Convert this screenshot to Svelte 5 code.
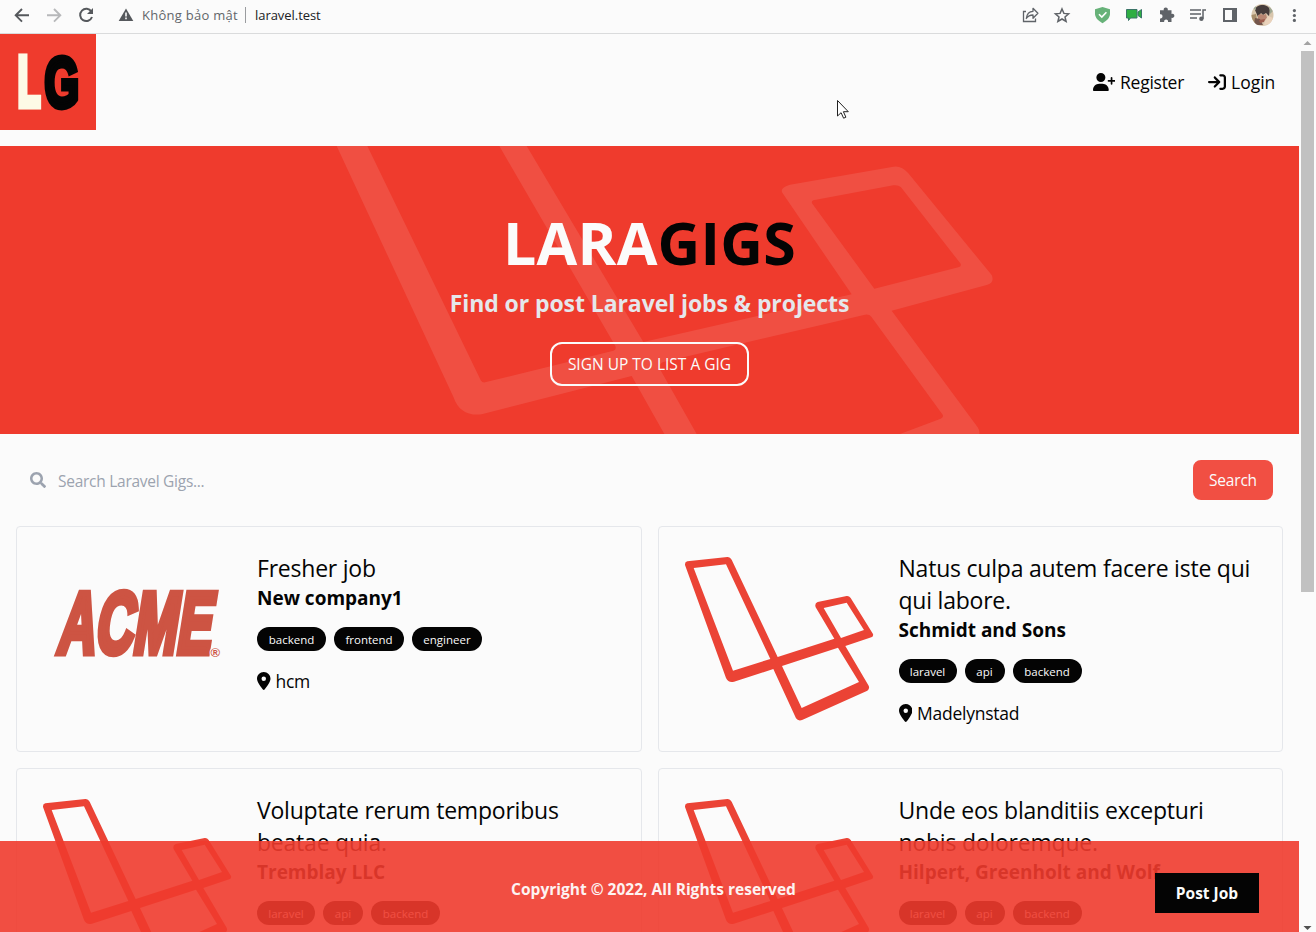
<script>
  const icons = {
    user: {
      box: '0 0 640 512', w: 22.5, h: 18,
      d: 'M96 128a128 128 0 1 1 256 0A128 128 0 1 1 96 128zM0 482.3C0 383.8 79.8 304 178.3 304h91.4C368.2 304 448 383.8 448 482.3c0 16.4-13.3 29.7-29.7 29.7H29.7C13.3 512 0 498.7 0 482.3zM504 312V248H440c-13.3 0-24-10.7-24-24s10.7-24 24-24h64V136c0-13.3 10.7-24 24-24s24 10.7 24 24v64h64c13.3 0 24 10.7 24 24s-10.7 24-24 24H552v64c0 13.3-10.7 24-24 24s-24-10.7-24-24z'
    },
    login: {
      box: '0 0 512 512', w: 18, h: 18,
      d: 'M352 96l64 0c17.7 0 32 14.3 32 32l0 256c0 17.7-14.3 32-32 32l-64 0c-17.7 0-32 14.3-32 32s14.3 32 32 32l64 0c53 0 96-43 96-96l0-256c0-53-43-96-96-96l-64 0c-17.7 0-32 14.3-32 32s14.3 32 32 32zm-9.4 182.6c12.5-12.5 12.5-32.8 0-45.3l-128-128c-12.5-12.5-32.8-12.5-45.3 0s-12.5 32.8 0 45.3L242.7 224 32 224c-17.7 0-32 14.3-32 32s14.3 32 32 32l210.7 0-73.4 73.4c-12.5 12.5-12.5 32.8 0 45.3s32.8 12.5 45.3 0l128-128z'
    },
    pin: {
      box: '0 0 384 512', w: 13.5, h: 18,
      d: 'M215.7 499.2C267 435 384 279.4 384 192C384 86 298 0 192 0S0 86 0 192c0 87.4 117 243 168.3 307.2c12.3 15.3 35.1 15.3 47.4 0zM192 128a64 64 0 1 1 0 128 64 64 0 1 1 0-128z'
    },
    search: {
      box: '0 0 512 512', w: 16, h: 16,
      d: 'M505 442.7L405.3 343c-4.5-4.5-10.6-7-17-7H372c27.6-35.3 44-79.7 44-128C416 93.1 322.9 0 208 0S0 93.1 0 208s93.1 208 208 208c48.3 0 92.7-16.4 128-44v16.3c0 6.4 2.5 12.5 7 17l99.7 99.7c9.4 9.4 24.6 9.4 33.9 0l28.3-28.3c9.4-9.4 9.4-24.6.1-34zM208 336c-70.7 0-128-57.2-128-128 0-70.7 57.2-128 128-128 70.7 0 128 57.2 128 128 0 70.7-57.2 128-128 128z'
    }
  };

  const gigs = [
    { title: ['Fresher job'], company: 'New company1', tags: ['backend', 'frontend', 'engineer'], place: 'hcm', acme: true },
    { title: ['Natus culpa autem facere iste qui', 'qui labore.'], company: 'Schmidt and Sons', tags: ['laravel', 'api', 'backend'], place: 'Madelynstad' },
    { title: ['Voluptate rerum temporibus', 'beatae quia.'], company: 'Tremblay LLC', tags: ['laravel', 'api', 'backend'], place: '' },
    { title: ['Unde eos blanditiis excepturi', 'nobis doloremque.'], company: 'Hilpert, Greenholt and Wolf', tags: ['laravel', 'api', 'backend'], place: '' }
  ];
</script>

{#snippet icon(i)}
  <svg class="icon" viewBox={i.box} width={i.w} height={i.h} fill="currentColor"><path d={i.d} /></svg>
{/snippet}

<div class="window">
  <div class="toolbar">
    <svg class="left-tools" width="140" height="32" viewBox="0 0 140 32" fill="none">
      <path d="M29 15.3H16M22 9l-6.3 6.3L22 21.6" stroke="#55585c" stroke-width="1.9" />
      <path d="M47 15.3h13M54 9l6.3 6.3L54 21.6" stroke="#b7b8ba" stroke-width="1.9" />
      <path d="M91.4 11.6A6.1 6.1 0 1 0 92 17" stroke="#55585c" stroke-width="2" />
      <path d="M93 8v6h-6z" fill="#55585c" />
      <path d="M126 8.5l7.3 12.5h-14.6z" fill="#55585c" />
      <path d="M126 12.5v4M126 17.5v1.7" stroke="#fbfbfb" stroke-width="1.6" />
    </svg>
    <span class="insecure">Không bảo mật</span>
    <span class="divider"></span>
    <span class="host">laravel.test</span>
    <svg class="right-tools" width="296" height="32" viewBox="1020 0 296 32" fill="none">
      <g stroke="#5f6368" stroke-width="1.3">
        <path d="M1026 11.500h-2.500v10h12V18.500" />
        <path d="M1026.300 18.500c.5-4.500 3-7 6.700-7.200V8.300l4.900 5-4.900 5v-3.300c-2.800 0-4.900.8-6.700 3.500z" stroke-linejoin="round" />
        <path d="M1062 9l1.900 4.400 4.700.4-3.600 3.100 1.100 4.600-4.100-2.500-4.100 2.500 1.100-4.600-3.600-3.100 4.700-.4z" stroke-width="1.500" />
      </g>
      <path d="M1102.500 7l7.500 2.300v4.500c0 4-3.500 7.300-7.500 9.400-4-2.100-7.500-5.400-7.500-9.400V9.300z" fill="#67b279" />
      <path d="M1099 14.200l2.800 2.800 4.600-4.800" stroke="#fff" stroke-width="1.600" />
      <path d="M1126.500 9.500h10.500v8.500h-6.500l-2 2.500V18h-2z" fill="#2fae43" stroke="#3b7468" />
      <path d="M1138 12l3.500-2.500v8.500l-3.500-2.500z" fill="#2fae43" stroke="#3b7468" />
      <path d="M1171 10.300h-3.300a2.100 2.100 0 1 0-3.900 0H1160v4a2.100 2.100 0 1 1 0 4.100v3.600h4.200a2 2 0 1 1 3.800 0h3.500v-4.200a2.100 2.100 0 1 0 0-3.900v-3.600z" fill="#5f6368" />
      <path d="M1190 10h11M1190 14h11M1190 18h7M1203 18.700V9.900h3" stroke="#5f6368" stroke-width="1.500" />
      <circle cx="1201.400" cy="18.700" r="2.200" fill="#5f6368" />
      <path d="M1223 8h14v14h-14zM1225 10v10h7v-10z" fill="#5f6368" fill-rule="evenodd" />
      <clipPath id="face"><circle cx="1262.500" cy="15" r="11" /></clipPath>
      <g clip-path="url(#face)">
        <path d="M1251 4h23v22h-23z" fill="#d8c6ad" />
        <path d="M1251 15l5-1 2 12h-7z" fill="#a88e6b" />
        <path d="M1255 10c1-6 13-7 15 0l-1 6-3-3-3 2-2-2-3 4z" fill="#463c3b" />
        <path d="M1258 15l3-1 2 1 3-1 1 4-4 4-5-3z" fill="#b88672" />
        <path d="M1255 18l5 1 3 6h-9z" fill="#74564c" />
        <path d="M1265 21l3-5 5 2-2 6-7 1z" fill="#ead2bb" />
        <path d="M1259 20l6-1-1 3-4 1z" fill="#9c5b4c" />
        <path d="M1252 8l4-3v5zM1269 6l4 5-3 3z" fill="#9fa893" />
      </g>
      <g fill="#5f6368"><circle cx="1294.400" cy="10.600" r="1.600" /><circle cx="1294.400" cy="15.500" r="1.600" /><circle cx="1294.400" cy="20.400" r="1.600" /></g>
    </svg>
  </div>

  <div class="viewport">
    <main>
      <nav>
        <svg width="96" height="96" viewBox="0 34 96 96" class="brand">
          <rect y="34" width="96" height="96" fill="#ef3b2d" />
          <g font-family="Liberation Sans" font-weight="700">
            <text transform="translate(17.800 105.800) scale(.53 1)" font-size="70" fill="#fdfae6" stroke="#fdfae6" stroke-width="7">L</text>
            <text transform="translate(44.500 106.500) scale(.63 1)" font-size="70.500" fill="#040404" stroke="#040404" stroke-width="6">G</text>
          </g>
        </svg>
        <div class="links">
          <span class="link">{@render icon(icons.user)}<span class="reg">Register</span></span>
          <span class="link">{@render icon(icons.login)}<span class="log">Login</span></span>
        </div>
      </nav>

      <section class="hero">
        <svg class="pattern" viewBox="-990 18 3897 864" width="1299" height="288">
          <path fill="#fff" fill-opacity=".1" fill-rule="evenodd" d="M20 18L370 770Q390 830 455 823L905 708L1003 882H1948Q1950 873 1943 862L1685 512L1970 435Q1995 428 1985 405L1735 100Q1715 76 1690 80L1380 134Q1347 143 1358 160L1565 463L940 606L590 18ZM112 18L453 722Q457 728 465 727L850 632Q860 630 856 618L508 18ZM1710 882L1832 836Q1842 832 1838 824L1624 530Q1618 522 1605 524L1000 666Q985 672 990 688L1100 882ZM1450 181L1690 136Q1705 134 1713 142L1891 370Q1896 379 1885 382L1633 446L1446 190Q1444 183 1450 181Z" />
        </svg>
        <h1>LARA<span>GIGS</span></h1>
        <p>Find or post Laravel jobs &amp; projects</p>
        <a href="#register"><span>SIGN UP TO LIST A GIG</span></a>
      </section>

      <form>
        {@render icon(icons.search)}
        <span class="placeholder">Search Laravel Gigs...</span>
        <button type="button"><span>Search</span></button>
      </form>

      <div class="grid">
        {#each gigs as g}
          <article>
            {#if g.acme}
              <svg class="art" viewBox="41 551 192 176" width="192" height="176">
                <g font-family="Liberation Sans" font-weight="700" fill="#cd5443" stroke="#cd5443" stroke-width="7" transform="translate(56 653) skewX(-9)">
                  <text font-size="87" textLength="154" lengthAdjust="spacingAndGlyphs">ACME</text>
                </g>
                <text x="210.500" y="656.500" font-family="Liberation Sans" font-weight="700" font-size="13" fill="#cd5443" stroke="#fbfbfb" stroke-width="2" paint-order="stroke">®</text>
              </svg>
            {:else}
              <svg class="art" viewBox="99 93 576 528" width="192" height="176">
                <path fill="#eb4335" fill-rule="evenodd" d="M105 135Q104 125 112 124L232 111Q240 110 245 119L383 411L553 356L497 262Q493 250 503 246L590 228Q597 227 602 234L669 342Q671 349 664 352L586 378L656 497Q660 506 652 512L458 599Q445 605 438 595L370 447L252 485Q235 489 228 474ZM131 144L228 133L361 417L249 452ZM396 438L564 383L627 486L455 564ZM521 264L590 248L642 330L573 354Z" />
              </svg>
            {/if}
            <div class="info">
              <h3>{#each g.title as line}<span>{line}</span>{/each}</h3>
              <div class="company">{g.company}</div>
              <ul>{#each g.tags as t}<li class={t}>{t}</li>{/each}</ul>
              {#if g.place}
                <div class="place">{@render icon(icons.pin)}<span>{g.place}</span></div>
              {/if}
            </div>
          </article>
        {/each}
      </div>
    </main>
    <div class="scroll">
      <svg width="17" height="17" viewBox="0 0 17 17"><path d="M4.500 11h8l-4-4z" fill="#a3a3a3" /></svg>
      <i></i>
      <svg class="down" width="17" height="8" viewBox="0 0 17 8"><path d="M4.500 2h8l-4 4z" fill="#505050" /></svg>
    </div>
    <footer>
      <p>Copyright © 2022, All Rights reserved</p>
      <a href="#post"><span>Post Job</span></a>
    </footer>
  </div>
  <svg class="pointer" width="14" height="22" viewBox="0 0 14 22"><path d="M1.500 1.500v15.500l3.600-3.300 2.500 5.500 2.300-1-2.500-5.500h4.900z" fill="#fff" stroke="#222" stroke-width="1" /></svg>
</div>

<style>
  :global(body) { margin: 0; background: #fbfbfb; overflow: hidden; }
  .window { position: relative; width: 1316px; height: 932px; overflow: hidden; display: flex; flex-direction: column; background: #fbfbfb; color: #040404; font-family: "Open Sans", "Noto Sans", sans-serif; }
  .window * { box-sizing: border-box; }
  span, h1, p, li, .company { white-space: nowrap; }
  svg { display: block; flex: none; }
  .art { overflow: visible; }
  a { color: inherit; text-decoration: none; }

  .toolbar { height: 34px; flex: none; display: flex; align-items: flex-start; border-bottom: 1px solid #dadbdc; font-size: 13px; line-height: 30px; }
  .insecure { margin-left: 2px; width: 103px; color: #62666a; letter-spacing: 0.27px; }
  .divider { width: 1px; height: 16px; margin: 7px 9px 0 0; background: #9a9c9f; }
  .host { color: #202124; letter-spacing: -0.05px; }
  .right-tools { margin-left: auto; }

  .viewport { flex: 1; display: flex; position: relative; min-height: 0; overflow: hidden; }
  main { width: 1299px; flex: none; }
  nav { display: flex; justify-content: space-between; align-items: center; height: 96px; margin-bottom: 16px; }
  .links { display: flex; gap: 24px; margin-right: 24px; font-size: 17.500px; }
  .link { display: flex; align-items: center; gap: 5px; line-height: 28px; }
  .reg { width: 64px; letter-spacing: -0.25px; }
  .log { width: 44px; }

  .hero { position: relative; height: 288px; padding-top: 16px; background: #ef3b2d; display: flex; flex-direction: column; align-items: center; justify-content: center; }
  .hero > :not(.pattern) { position: relative; }
  .pattern { position: absolute; inset: 0; }
  h1 { margin: 0; padding-top: 2px; height: 60px; font-size: 59px; line-height: 60px; font-weight: 700; letter-spacing: 0.25px; color: #fbfbfb; }
  h1 span { color: #040404; }
  .hero p { margin: 16px 0; padding-top: 1px; height: 32px; font-size: 23px; line-height: 32px; font-weight: 700; letter-spacing: -0.08px; color: #e5e7eb; }
  .hero a { margin-top: 8px; width: 199px; height: 44px; border: 2px solid #fbfbfb; border-radius: 12px; color: #fbfbfb; font-size: 15.500px; line-height: 40px; text-align: center; }

  form { height: 60px; margin: 16px; padding: 0 10px 0 14px; display: flex; align-items: center; color: #9ca3af; font-size: 15.500px; }
  .placeholder { margin-left: 12px; padding-top: 2px; flex: 1; letter-spacing: -0.27px; }
  button { width: 80px; height: 40px; padding: 0; border: 0; border-radius: 8px; background: #f14f43; color: #fbfbfb; font: inherit; letter-spacing: -0.2px; }

  .grid { display: grid; grid-template-columns: 1fr 1fr; gap: 16px; margin: 0 16px; }
  article { display: flex; gap: 24px; height: 226px; padding: 24px; border: 1px solid #e5e7eb; border-radius: 4px; }
  h3 { margin: 0; font-size: 23px; line-height: 32px; font-weight: 400; letter-spacing: -0.22px; }
  h3 span { display: block; height: 32px; padding-top: 1px; }
  .company { font-size: 19px; height: 28px; padding-top: 1px; line-height: 28px; font-weight: 700; margin-bottom: 16px; }
  ul { display: flex; gap: 8px; list-style: none; margin: 0 0 16px; padding: 0; }
  li { width: 69px; height: 24px; border-radius: 12px; background: #040404; color: #fbfbfb; font-size: 11.500px; line-height: 25px; text-align: center; }
  li.frontend, li.engineer { width: 70px; }
  li.laravel { width: 58px; }
  li.api { width: 40px; }
  .place { display: flex; align-items: center; gap: 5px; font-size: 17.500px; line-height: 28px; letter-spacing: -0.25px; }

  .scroll { width: 17px; display: flex; flex-direction: column; }
  .scroll i { width: 13px; height: 541px; margin-left: 2px; background: #c1c1c1; }
  .scroll .down { margin-top: auto; }

  footer { position: absolute; left: 0; bottom: -5px; width: 1299px; height: 96px; background: rgba(239, 59, 45, .9); display: flex; align-items: center; justify-content: center; color: #fdf3f2; font-weight: 700; font-size: 15.500px; }
  footer p { margin: 0 0 0 8px; }
  footer a { position: absolute; top: 32px; right: 40px; width: 104px; height: 40px; background: #040404; color: #fbfbfb; line-height: 40px; text-align: center; }

  .pointer { position: absolute; left: 836px; top: 99px; }
</style>
